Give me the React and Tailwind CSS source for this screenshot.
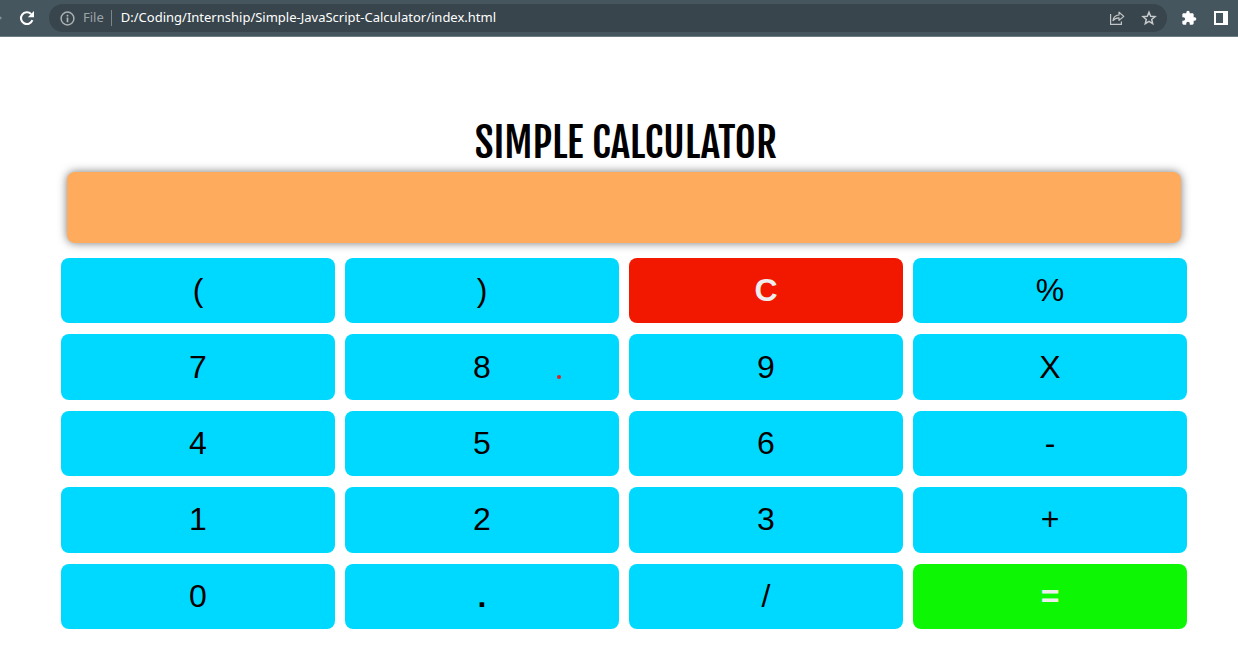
import React, { useState } from "react";

const KEYS = [
  "(", ")", "C", "%",
  "7", "8", "9", "X",
  "4", "5", "6", "-",
  "1", "2", "3", "+",
  "0", ".", "/", "=",
];

const TONES = {
  C: "bg-[#f21800] font-bold text-[#eeeeee]",
  "=": "bg-[#0df704] font-bold text-[#eeeeee]",
  ".": "bg-[#00d9ff] font-bold text-black",
};

function BrowserBar() {
  return (
    <header className="flex h-[37px] shrink-0 items-center border-b border-[#6a7b84] bg-[#45565f] font-['Noto_Sans','Open_Sans',sans-serif] text-[13px]">
      <svg className="h-4 w-[3px] shrink-0" viewBox="0 0 3 16" aria-hidden="true">
        <path d="M-2 4.5 L2 8 L-2 11.5 Z" fill="#84919a" />
      </svg>
      <button type="button" aria-label="Reload" className="ml-4 shrink-0">
        <svg className="size-4" viewBox="0 0 16 16" fill="none">
          <path d="M13.400 10.200 A5.900 5.900 0 1 1 12.100 4" stroke="#fff" strokeWidth="2.1" />
          <path d="M15 1 V7.2 H8.8 Z" fill="#fff" />
        </svg>
      </button>
      <div className="ml-[14px] flex h-7 min-w-0 flex-1 items-center rounded-full bg-[#38454c] pr-[10px] pl-[11px]">
        <svg className="size-[15px] shrink-0" viewBox="0 0 15 15" fill="none" aria-hidden="true">
          <circle cx="7.5" cy="7.5" r="6.4" stroke="#a9b0b4" strokeWidth="1.5" />
          <path d="M7.5 6.600 V11.200 M7.5 3.800 V5.400" stroke="#b0b6ba" strokeWidth="1.700" />
        </svg>
        <label htmlFor="address" className="ml-2 shrink-0 text-[#9ca4a8]">File</label>
        <span className="ml-[7px] h-4 w-px shrink-0 bg-[#7c868b]" />
        <input
          id="address"
          type="text"
          defaultValue="D:/Coding/Internship/Simple-JavaScript-Calculator/index.html"
          className="ml-[9px] min-w-0 flex-1 bg-transparent text-white outline-none"
        />
        <button type="button" aria-label="Share" className="shrink-0">
          <svg className="size-4" viewBox="0 0 16 16" fill="none" stroke="#c2c6c8" strokeWidth="1.2">
            <path d="M1.6 4 V14.4 H12.4 V11.6" />
            <path d="M4 10.6 C4.4 7 6.4 5.2 10 5 V2.2 L14.8 6.4 L10 10.4 V7.8 C7.2 7.8 5.4 8.6 4 10.6 Z" strokeLinejoin="round" />
          </svg>
        </button>
        <button type="button" aria-label="Bookmark" className="ml-4 shrink-0">
          <svg className="size-4" viewBox="0 0 16 16" fill="none">
            <path d="M8 2.2 L9.7 6.2 L14 6.6 L10.7 9.4 L11.7 13.6 L8 11.4 L4.3 13.6 L5.3 9.4 L2 6.6 L6.3 6.2 Z" stroke="#c6cacc" strokeWidth="1.5" />
          </svg>
        </button>
      </div>
      <button type="button" aria-label="Extensions" className="ml-[14px] shrink-0">
        <svg className="size-4" viewBox="0 0 24 24" fill="#fff">
          <path d="M20.5 11H19V7c0-1.1-.9-2-2-2h-4V3.500a2.500 2.500 0 0 0-5 0V5H4c-1.100 0-2 .9-2 2v3.800h1.500a2.700 2.700 0 0 1 0 5.400H2V20c0 1.100.9 2 2 2h3.800v-1.500a2.700 2.700 0 0 1 5.400 0V22H17c1.100 0 2-.9 2-2v-4h1.500a2.500 2.500 0 0 0 0-5z" />
        </svg>
      </button>
      <button type="button" aria-label="Side panel" className="mr-[10px] ml-[17px] shrink-0">
        <svg className="size-[14px]" viewBox="0 0 14 14">
          <path d="M0 0 H14 V14 H0 Z M2 2 V12 H9 V2 Z" fill="#fff" fillRule="evenodd" />
        </svg>
      </button>
    </header>
  );
}

export default function App() {
  const [value, setValue] = useState("");

  const press = (key) => {
    if (key === "C") return setValue("");
    if (key !== "=") setValue(value + key);
  };

  return (
    <div className="flex min-h-screen flex-col bg-white">
      <BrowserBar />
      <main className="flex flex-1 flex-col pt-20 pr-[51px] pb-[37px] pl-[61px] font-['Liberation_Sans',Arial,sans-serif]">
        <h1 className="pl-1 text-center font-['Fjalla_One','Open_Sans_Condensed','Liberation_Sans_Narrow',sans-serif] text-[41px] leading-[52px] font-normal text-black">
          SIMPLE CALCULATOR
        </h1>
        <input
          type="text"
          aria-label="Result"
          value={value}
          onChange={(event) => setValue(event.target.value)}
          className="mx-[6px] mt-[3px] h-[71px] rounded-lg bg-[#ffab5e] px-4 text-[32px] text-black shadow-[0_0_10px_#777777] outline-none"
        />
        <div className="mt-[15px] grid flex-1 auto-rows-fr grid-cols-4 gap-x-[10px] gap-y-[11px]">
          {KEYS.map((key) => (
            <button
              key={key}
              type="button"
              onClick={() => press(key)}
              className={`relative rounded-lg pb-px text-[32px] leading-9 ${TONES[key] ?? "bg-[#00d9ff] text-black"}`}
            >
              {key}
              {key === "8" && (
                <span className="absolute top-[41px] left-[78%] size-1 -translate-x-1/2 rounded-full bg-[#e02020]" />
              )}
            </button>
          ))}
        </div>
      </main>
    </div>
  );
}
